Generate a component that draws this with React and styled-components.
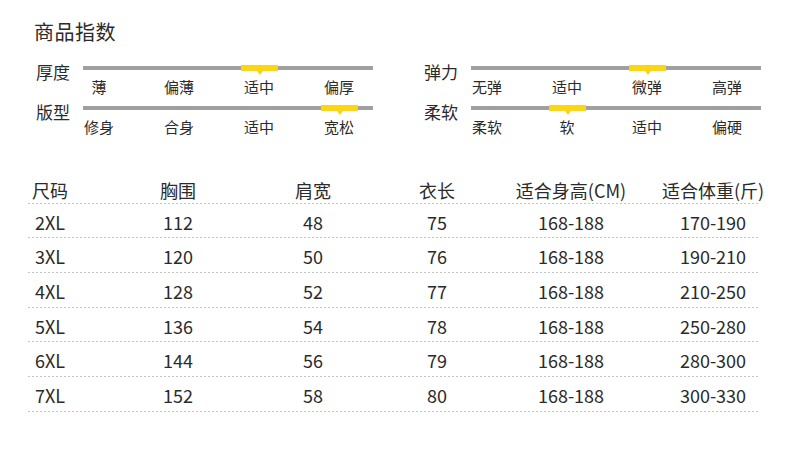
import React from 'react';
import styled, { createGlobalStyle } from 'styled-components';

const Global = createGlobalStyle`
    body {
        margin: 0;
        background: #fff;
        font-family: "Noto Sans CJK SC", "Noto Sans", sans-serif;
        color: #2b2b2b;
    }
`

const Page = styled.div`
    width: 790px;
    height: 458px;
    overflow: hidden;
    padding: 20px 0 0 0;
    box-sizing: border-box;
`

const Title = styled.h1`
    margin: 0 0 18px 34px;
    font-size: 20px;
    line-height: 24px;
    font-weight: 400;
    letter-spacing: 0.5px;
`

const Indexes = styled.div`
    display: flex;
    gap: 51px;
    padding-left: 36px;
`

const Group = styled.div`
    display: flex;
    flex-direction: column;
    gap: 5px;
`

const IndexRow = styled.div`
    display: grid;
    grid-template-columns: 47px 290px;
`

const Label = styled.div`
    font-size: 17px;
    line-height: 24px;
    margin-top: -2px;
    white-space: nowrap;
`

const Track = styled.div`
    padding-top: 4px;
`

const Bar = styled.div`
    position: relative;
    height: 4px;
    background: #9f9f9f;
`

const Marker = styled.div`
    position: absolute;
    top: -1px;
    left: ${p => 16.5 + p.$pos * 80 - 18.5}px;
    width: 37px;
    height: 6px;
    background: #fcd614;

    &::after {
        content: '';
        position: absolute;
        left: 50%;
        top: 6px;
        margin-left: -3px;
        border-left: 3px solid transparent;
        border-right: 3px solid transparent;
        border-top: 4px solid #fcd614;
    }
`

const Options = styled.div`
    display: grid;
    grid-template-columns: repeat(4, 80px);
    margin: 7px 0 0 -24px;
    font-size: 15px;
    line-height: 20px;
    text-align: center;
`

const Table = styled.div`
    margin: 32px 0 0 28px;
    width: 732px;
`

const Row = styled.div`
    display: grid;
    grid-template-columns: 44px 212px 58px 190px 78px 206px;
    height: 34.67px;
    box-sizing: border-box;
    padding-top: ${p => (p.$head ? 7 : 4)}px;
    font-size: 18px;
    line-height: 28px;
    text-align: center;
    white-space: nowrap;
    background: repeating-linear-gradient(to right, #c4c4c4 0 2px, transparent 2px 4px) left bottom / 100% 1px no-repeat;
`

const Cell = styled.div`
    display: flex;
    justify-content: center;
`

const indexes = [
    [
        { label: '厚度', opts: ['薄', '偏薄', '适中', '偏厚'], pick: 2 },
        { label: '版型', opts: ['修身', '合身', '适中', '宽松'], pick: 3 },
    ],
    [
        { label: '弹力', opts: ['无弹', '适中', '微弹', '高弹'], pick: 2 },
        { label: '柔软', opts: ['柔软', '软', '适中', '偏硬'], pick: 1 },
    ],
]

const head = ['尺码', '胸围', '肩宽', '衣长', '适合身高(CM)', '适合体重(斤)']

const rows = [
    ['2XL', '112', '48', '75', '168-188', '170-190'],
    ['3XL', '120', '50', '76', '168-188', '190-210'],
    ['4XL', '128', '52', '77', '168-188', '210-250'],
    ['5XL', '136', '54', '78', '168-188', '250-280'],
    ['6XL', '144', '56', '79', '168-188', '280-300'],
    ['7XL', '152', '58', '80', '168-188', '300-330'],
]

export default function App() {
    return (
        <Page>
            <Global />
            <Title>商品指数</Title>
            <Indexes>
                {indexes.map((group, gi) => (
                    <Group key={gi}>
                        {group.map(item => (
                            <IndexRow key={item.label}>
                                <Label>{item.label}</Label>
                                <Track>
                                    <Bar>
                                        <Marker $pos={item.pick} />
                                    </Bar>
                                    <Options>
                                        {item.opts.map((o, i) => <span key={i}>{o}</span>)}
                                    </Options>
                                </Track>
                            </IndexRow>
                        ))}
                    </Group>
                ))}
            </Indexes>
            <Table>
                <Row $head>
                    {head.map(h => <Cell key={h}>{h}</Cell>)}
                </Row>
                {rows.map(r => (
                    <Row key={r[0]}>
                        {r.map((c, i) => <Cell key={i}>{c}</Cell>)}
                    </Row>
                ))}
            </Table>
        </Page>
    )
}
